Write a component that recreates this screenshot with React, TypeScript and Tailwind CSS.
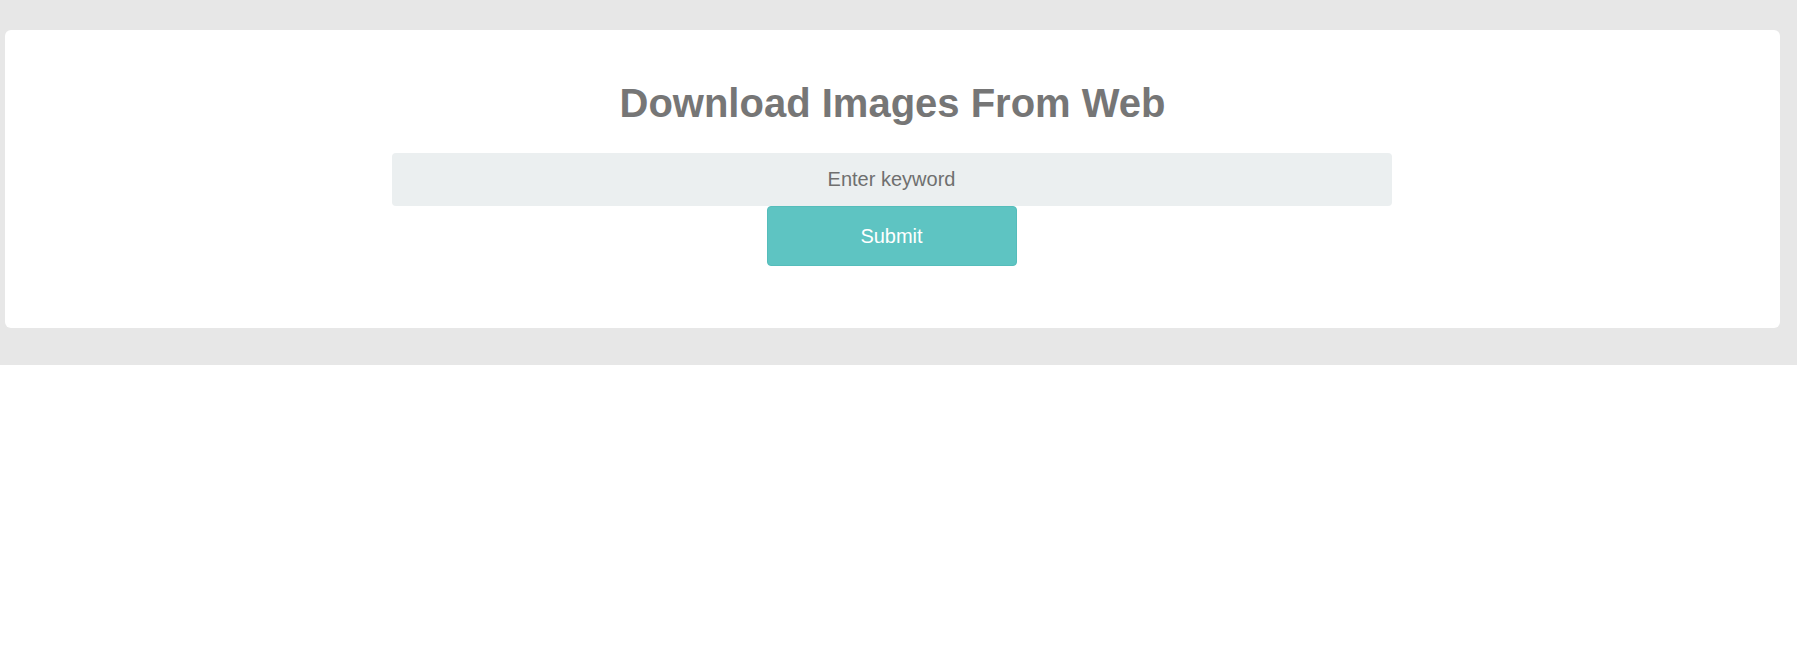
import { useState } from "react";

export default function App() {
  const [keyword, setKeyword] = useState("");

  return (
    <div className="min-h-screen bg-white font-['Liberation_Sans',Arial,sans-serif]">
      <div className="bg-[#e7e7e7] pt-[30px] pb-[37px] pl-[5px] pr-[17px]">
        <div className="flex flex-col items-center bg-white rounded-[6px] pt-[50px] pb-[62px]">
          <h1 className="text-[40px] leading-[46px] font-bold text-[#767676]">
            Download Images From Web
          </h1>
          <input
            type="text"
            value={keyword}
            onChange={(e) => setKeyword(e.target.value)}
            placeholder="Enter keyword"
            className="mt-[27px] mr-[2px] w-[1000px] h-[53px] bg-[#ebeff0] rounded-[4px] text-center text-[20px] text-[#6f6f6f] placeholder:text-[#6f6f6f] outline-none"
          />
          <button
            type="button"
            className="mr-[2px] w-[250px] h-[60px] bg-[#5ec4c2] border border-[#55bdbb] rounded-[4px] text-white text-[20px]"
          >
            Submit
          </button>
        </div>
      </div>
    </div>
  );
}
